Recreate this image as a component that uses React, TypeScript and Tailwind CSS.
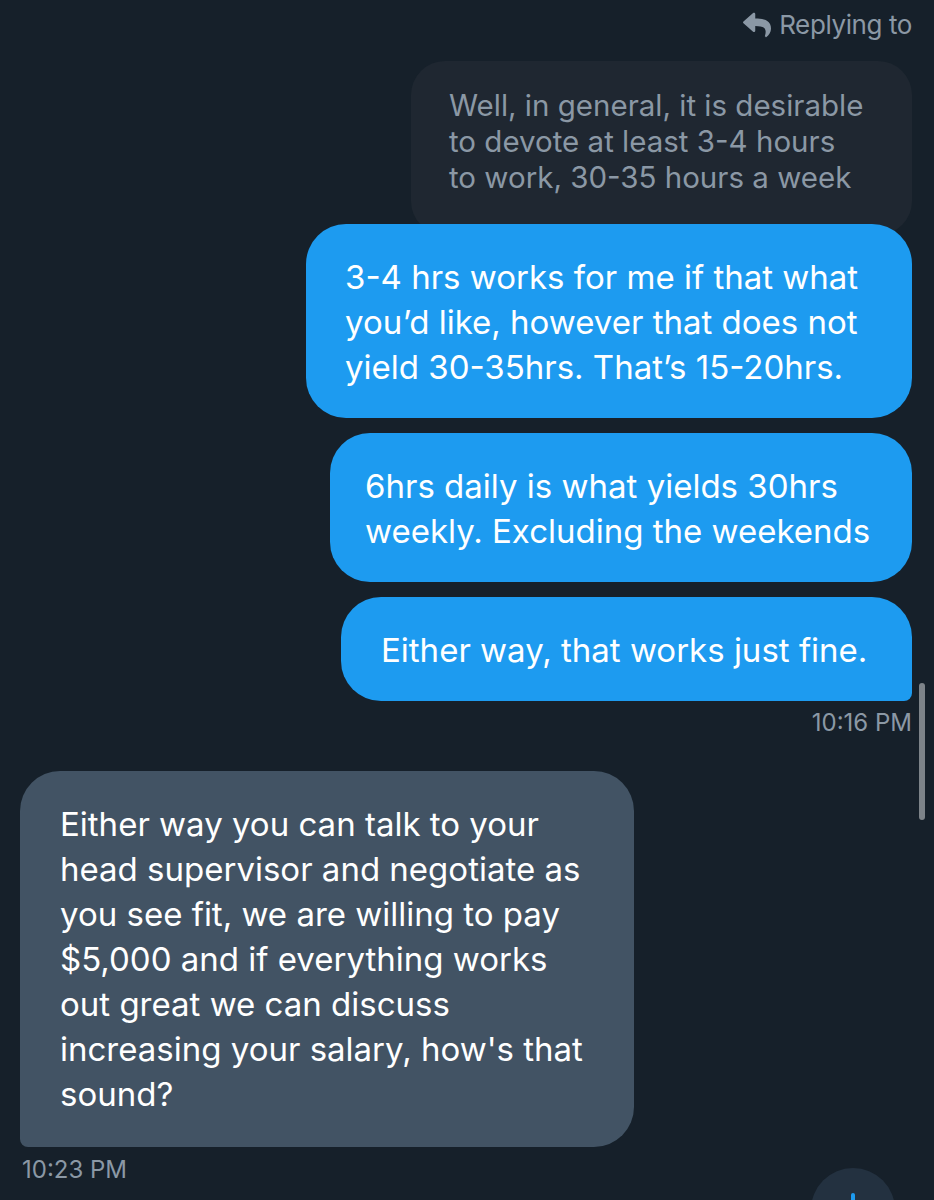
import React from 'react'
import { FaReply } from 'react-icons/fa'

const font = { fontFamily: '"Inter", "Liberation Sans", sans-serif' }

export default function App() {
  return (
    <div className="relative w-[934px] h-[1200px] overflow-hidden bg-[#16202a] pl-[20px] pr-[22px]" style={font}>

      <div className="flex justify-end items-center gap-[8px] pt-[7px] h-[42px] text-[26px] text-[#8b98a5] tracking-[-0.4px]">
        <FaReply className="w-[28px] h-[28px] text-[#8b98a5]" />
        <span>Replying to</span>
      </div>

      <div className="flex flex-col items-end">
        <div className="mt-[19px] w-[501px] h-[174px] rounded-[34px] bg-[#1f2731] pl-[38px] pt-[26px] text-[29.5px] leading-[36px] text-[#8b98a5]">
          Well, in general, it is desirable<br />
          to devote at least 3-4 hours<br />
          to work, 30-35 hours a week
        </div>

        <div className="relative -mt-[11px] w-[606px] rounded-[40px] bg-[#1d9bf0] pl-[39px] pt-[31px] pb-[28px] text-[33px] leading-[45px] text-white">
          3-4 hrs works for me if that what<br />
          you’d like, however that does not<br />
          yield 30-35hrs. That’s 15-20hrs.
        </div>

        <div className="mt-[15px] w-[582px] rounded-[40px] bg-[#1d9bf0] pl-[35px] pt-[31px] pb-[28px] text-[33px] leading-[45px] text-white">
          6hrs daily is what yields 30hrs<br />
          weekly. Excluding the weekends
        </div>

        <div className="mt-[15px] w-[571px] rounded-[40px] rounded-br-[8px] bg-[#1d9bf0] pl-[40px] pt-[31px] pb-[28px] text-[33px] leading-[45px] text-white">
          Either way, that works just fine.
        </div>

        <div className="mt-[7px] text-[24px] leading-[30px] text-[#8b98a5]">10:16 PM</div>
      </div>

      <div className="mt-[33px] w-[614px] rounded-[40px] rounded-bl-[8px] bg-[#425364] pl-[40px] pt-[31px] pb-[30px] text-[33px] leading-[45px] text-white">
        Either way you can talk to your<br />
        head supervisor and negotiate as<br />
        you see fit, we are willing to pay<br />
        $5,000 and if everything works<br />
        out great we can discuss<br />
        increasing your salary, how's that<br />
        sound?
      </div>

      <div className="mt-[8px] ml-[2px] text-[24px] leading-[30px] text-[#8b98a5]">10:23 PM</div>

      {/* scrollbar */}
      <div className="absolute left-[919px] top-[683px] w-[6px] h-[137px] rounded-full bg-[#7d8389]" />

      {/* scroll-to-bottom button */}
      <div className="absolute left-[811px] top-[1168px] w-[84px] h-[84px] rounded-full bg-[#233140] flex justify-center">
        <div className="mt-[25px] w-[4px] h-[14px] rounded-sm bg-[#1d9bf0]" />
      </div>
    </div>
  )
}
